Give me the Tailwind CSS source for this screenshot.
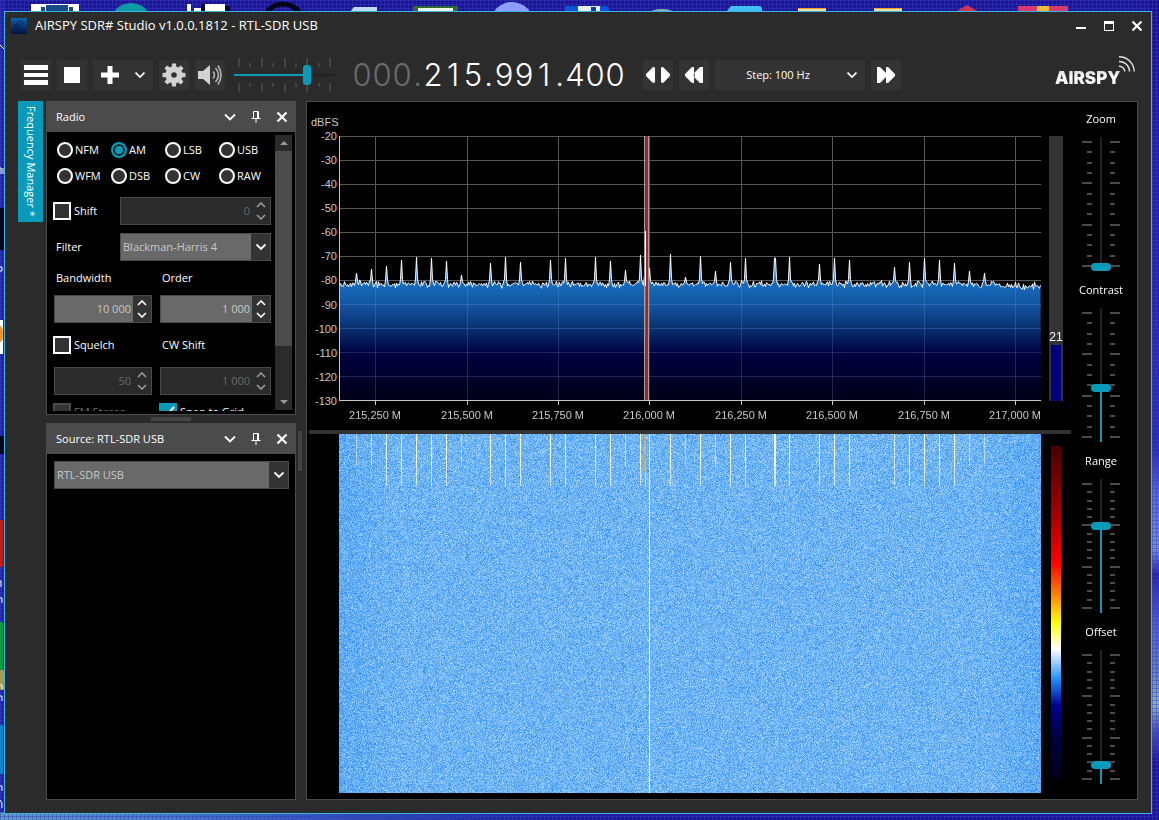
<!DOCTYPE html>
<html lang="en">
<head>
    <meta charset="UTF-8">
    <meta name="viewport" content="width=device-width, initial-scale=1.0">
    <title>AIRSPY SDR# Studio v1.0.0.1812 - RTL-SDR USB</title>
    <script src="https://cdn.jsdelivr.net/npm/@tailwindcss/browser@4"></script>
</head>
<body class="relative h-screen overflow-hidden bg-[#1b1594] pt-[11px] pr-[7px] pb-1.5 pl-1 font-['Open_Sans','Noto_Sans',sans-serif] text-[11px] text-white">

    <!-- Desktop wallpaper and the icons that stick out behind the window -->
    <svg class="absolute inset-0 size-full" viewBox="0 0 1159 820" preserveAspectRatio="none" aria-hidden="true">
        <defs>
            <pattern id="mesh" width="4" height="4" patternUnits="userSpaceOnUse">
                <path d="M0 .5H4M.5 0V4" stroke="#3a3cc0" stroke-opacity=".45"/>
            </pattern>
            <linearGradient id="side" x1="0" x2="0" y1="0" y2="1">
                <stop offset="0" stop-color="#180f88"/><stop offset=".2" stop-color="#2320a8"/><stop offset=".55" stop-color="#2a2cb4"/>
                <stop offset=".6" stop-color="#4d6ad6"/><stop offset=".67" stop-color="#6c8fe0"/><stop offset=".7" stop-color="#2127a8"/>
                <stop offset=".76" stop-color="#4a60cc"/><stop offset=".82" stop-color="#5a86c4"/><stop offset=".86" stop-color="#7fb6cc"/>
                <stop offset=".89" stop-color="#4a52b8"/><stop offset=".93" stop-color="#1c1494"/><stop offset="1" stop-color="#1c1494"/>
            </linearGradient>
            <linearGradient id="floor">
                <stop offset="0" stop-color="#5a9dc0"/><stop offset=".15" stop-color="#3f7fc0"/><stop offset=".3" stop-color="#2b4fb4"/>
                <stop offset=".5" stop-color="#1b1a98"/><stop offset="1" stop-color="#1b1494"/>
            </linearGradient>
        </defs>
        <rect x="1150" width="9" height="820" fill="url(#side)"/>
        <rect width="5" height="820" fill="#2222a8"/>
        <rect y="812" width="1159" height="8" fill="url(#floor)"/>
        <rect width="1159" height="820" fill="url(#mesh)"/>
        <path d="M31 4h48v8H31z" fill="#fff"/><path d="M41 7h4v5h-4zM46 5h22v7H46zM69 7h4v5h-4z" fill="#174a86"/>
        <circle cx="131" cy="24" r="21" fill="#0d9ba5"/>
        <path d="M187 4h4v8h-4zM194 8h8v4h-8zM205 4h20v8h-20z" fill="#fff"/><path d="M201 4h4v8h-4zM225 6h5v6h-5z" fill="#0a0a22"/>
        <circle cx="283" cy="24" r="20" fill="none" stroke="#05051a" stroke-width="5"/>
        <path d="M354 7h23v5h-27z" fill="#b9dcf0"/>
        <path d="M413 6h45v6h-45z" fill="#2d6b32"/><path d="M418 8h35v4h-35z" fill="#e9f6ee"/>
        <circle cx="512" cy="24" r="22" fill="#8d9cff"/>
        <path d="M565 6h42l4 6h-46z" fill="#0a54dd"/><path d="M578 6h22v6h-22z" fill="#e6f0fb"/><path d="M591 7h5v4h-5z" fill="#123e9a"/>
        <ellipse cx="662" cy="13" rx="12" ry="4" fill="#7fb5b4"/>
        <path d="M731 6h28a3 3 0 0 1 3 3v3h-36z" fill="#3fc1f7"/>
        <path d="M798 8h28v4h-28zM874 8h28v4h-28z" fill="#e9e09a"/><path d="M798 8h28v1h-28zM874 8h28v1h-28z" fill="#f2a13c"/>
        <path d="M967 5l12 7h-24z" fill="#c83458"/>
        <path d="M1018 6h50v6h-50z" fill="#d73b6e"/><path d="M1037 6h12v6h-12z" fill="#eec03c"/>
        <path d="M0 320h3v34H0z" fill="#fff"/><path d="M0 326q3 0 3 8t-3 8z" fill="#f0932b"/>
        <path d="M0 208h4v42H0zM0 436h4v18H0z" fill="#05051e"/>
        <path d="M0 520h3v47H0z" fill="#c21d14"/><path d="M0 622h3v48H0z" fill="#0f9d3c"/>
        <path d="M0 670h4v20H0z" fill="#a89a4c"/><path d="M0 725h3v49H0z" fill="#1283d0"/>
        <path d="M0 45l4 4M0 168h1v6M3 168v6M0 267h2v4H0M0 581h1v6M0 685h2v4M0 696h2v5M0 786h2v5M0 800l2 3v5M0 598h2v5" fill="none" stroke="#fff"/>
    </svg>

    <!-- Application window -->
    <div class="relative flex h-full flex-col border border-[#3fb4e4] bg-[#2b2b2b]">

        <!-- Title bar -->
        <header class="flex h-7 shrink-0 items-center pl-1.5">
            <svg class="size-4" viewBox="0 0 16 16" aria-hidden="true">
                <defs>
                    <linearGradient id="appIcon" x1="0" x2="0" y1="0" y2="1"><stop offset="0" stop-color="#0f62ae"/><stop offset="1" stop-color="#03103e"/></linearGradient>
                </defs>
                <path d="M0 0h16v16H0z" fill="url(#appIcon)"/>
                <path d="M2 11c2-6 5-6 5-3s-4 5-4 2 4-5 6-6 4 1 2 3-4 3-3 4" fill="none" stroke="#061c52"/>
            </svg>
            <h1 class="ml-2 text-[13px]">AIRSPY SDR# Studio v1.0.0.1812 - RTL-SDR USB</h1>
            <div class="ml-auto flex">
                <button class="flex h-6 w-7 items-center justify-center" aria-label="Minimize">
                    <svg class="size-3" viewBox="0 0 12 12"><path d="M1 7h10v2H1z" fill="#fff"/></svg>
                </button>
                <button class="flex h-6 w-7 items-center justify-center" aria-label="Maximize">
                    <svg class="size-3" viewBox="0 0 12 12"><path d="M1 1h10v10H1zM2 4v6h8V4z" fill="#fff" fill-rule="evenodd"/></svg>
                </button>
                <button class="flex h-6 w-7 items-center justify-center" aria-label="Close">
                    <svg class="size-3" viewBox="0 0 12 12"><path d="M1.500 1.500l9 9M10.500 1.500l-9 9" stroke="#fff" stroke-width="2.200"/></svg>
                </button>
            </div>
        </header>

        <!-- Toolbar -->
        <div class="flex shrink-0 items-center gap-1.5 px-4 pt-5 pb-[11px]">
            <button class="flex size-[30px] items-center justify-center bg-[#333]" aria-label="Menu">
                <svg class="h-6 w-6" viewBox="0 0 24 24"><path d="M0 2h24v5H0zM0 10h24v4H0zM0 17h24v5H0z" fill="#fff"/></svg>
            </button>
            <button class="flex size-[30px] items-center justify-center bg-[#333]" aria-label="Stop">
                <span class="size-4 bg-white"></span>
            </button>
            <button class="flex h-[30px] w-[60px] items-center justify-between bg-[#333] pr-2 pl-2" aria-label="Add">
                <svg class="size-[18px]" viewBox="0 0 18 18"><path d="M6.500 0h5v6.500H18v5h-6.500V18h-5v-6.500H0v-5h6.500z" fill="#fff"/></svg>
                <svg class="h-3 w-2.5" viewBox="0 0 10 12"><path d="M0.500 3.500l4.500 4.500 4.500-4.500" fill="none" stroke="#fff" stroke-width="1.700"/></svg>
            </button>
            <button class="flex size-[30px] items-center justify-center bg-[#333]" aria-label="Settings">
                <svg class="size-6" viewBox="0 0 24 24">
                    <g fill="#d2d2d2">
                        <path d="M12 3.500a8.500 8.500 0 1 0 0 17 8.500 8.500 0 0 0 0-17zm0 5.700a2.800 2.800 0 1 1 0 5.600 2.800 2.800 0 0 1 0-5.600z" fill-rule="evenodd"/>
                        <path id="tooth" d="M9.500 5l.6-4.500h3.800l.6 4.500z"/>
                        <use href="#tooth" transform="rotate(45 12 12)"/><use href="#tooth" transform="rotate(90 12 12)"/>
                        <use href="#tooth" transform="rotate(135 12 12)"/><use href="#tooth" transform="rotate(180 12 12)"/>
                        <use href="#tooth" transform="rotate(225 12 12)"/><use href="#tooth" transform="rotate(270 12 12)"/>
                        <use href="#tooth" transform="rotate(315 12 12)"/>
                    </g>
                </svg>
            </button>
            <button class="flex size-[30px] items-center justify-center bg-[#333]" aria-label="Mute">
                <svg class="size-6" viewBox="0 0 24 24">
                    <path d="M0 8h5l7-6v20l-7-6H0z" fill="#d2d2d2"/>
                    <path d="M15 8.500q3 3.500 0 7M17.500 5q6 7 0 14M20 2.500q6 9.500 0 19" fill="none" stroke="#b4b4b4" stroke-width="1.600"/>
                </svg>
            </button>

            <!-- Volume -->
            <div class="relative -my-1 ml-[3px] flex h-9 w-[101px] items-center">
                <div class="absolute inset-x-1 inset-y-0 flex items-center justify-between" data-hticks="9"></div>
                <div class="absolute inset-x-0 h-0.5 bg-[#222]"><div class="h-full w-[73%] bg-[#0a9ab9]"></div></div>
                <input type="range" min="0" max="100" value="74" aria-label="Volume" class="relative h-5 w-full appearance-none bg-transparent [&::-webkit-slider-thumb]:h-5 [&::-webkit-slider-thumb]:w-2 [&::-webkit-slider-thumb]:appearance-none [&::-webkit-slider-thumb]:rounded-[3px] [&::-webkit-slider-thumb]:bg-[#0a9ab9]">
            </div>

            <!-- Frequency readout, filled by script -->
            <div id="frequency" class="ml-[11px] flex font-['Inter',sans-serif] text-[31px] leading-7 font-light"></div>

            <button class="ml-3 flex size-[30px] items-center justify-center bg-[#333]" aria-label="Center frequency">
                <svg class="h-[18px] w-6" viewBox="0 0 24 18"><path d="M9 1.500v15L7 17 0 10V8l7-7zM15 1.500v15l2 .5 7-7V8l-7-7z" fill="#fff"/></svg>
            </button>
            <button class="flex size-[30px] items-center justify-center bg-[#333]" aria-label="Step down">
                <svg class="h-[18px] w-[18px]" viewBox="0 0 18 18"><path d="M9 1v6l6-6 3 0v16h-3l-6-6v6H7L0 10V8l7-7z" fill="#fff"/><path d="M9.500 7.500L9 9l.5 1.500" stroke="#333" fill="none"/></svg>
            </button>
            <div class="relative h-[30px] w-[150px]">
                <select aria-label="Step" class="size-full appearance-none bg-[#333] pr-6 text-center text-[11px] [text-align-last:center]">
                    <option>Step: 100 Hz</option>
                </select>
                <svg class="pointer-events-none absolute top-[9px] right-2 h-3 w-2.5" viewBox="0 0 10 12"><path d="M0.500 3.500l4.500 4.500 4.500-4.500" fill="none" stroke="#fff" stroke-width="1.700"/></svg>
            </div>
            <button class="flex size-[30px] items-center justify-center bg-[#333]" aria-label="Step up">
                <svg class="h-[18px] w-[18px]" viewBox="0 0 18 18"><path d="M9 1v6L3 1H0v16h3l6-6v6h2l7-7V8l-7-7z" fill="#fff"/></svg>
            </button>

            <a href="#" class="relative ml-auto flex h-[30px] w-20 items-end" aria-label="Airspy">
                <span class="bg-gradient-to-b from-[#c8c8c8] via-white to-[#e4e4e4] bg-clip-text font-['Inter',sans-serif] text-[17px] leading-6 font-black text-transparent">AIRSPY</span>
                <svg class="absolute -top-1 right-0 size-4" viewBox="0 0 16 16"><path d="M0 .8A15 15 0 0 1 15.200 15.500M0 5.500A10 10 0 0 1 10.500 15.500M0 10.300A5.500 5.500 0 0 1 5.800 15.500" fill="none" stroke="#e4e4e4" stroke-width="1.400"/></svg>
            </a>
        </div>

        <!-- Work area -->
        <main class="flex min-h-0 flex-1 px-[13px] pb-[13px]">
            <button class="mr-[3px] flex h-[121px] w-[25px] shrink-0 items-center justify-center bg-[#0a9ab9] text-[11px] [writing-mode:vertical-rl]">Frequency Manager *</button>

            <div class="flex w-[250px] shrink-0 flex-col">
                <!-- Radio panel -->
                <section class="flex h-[314px] shrink-0 flex-col border border-[#4b4b4b] bg-black">
                    <div class="flex h-[30px] shrink-0 items-center bg-[#4b4b4b] pr-[7px] pl-[9px]">
                        <h2>Radio</h2>
                        <div class="ml-auto flex gap-3.5" data-panel-buttons></div>
                    </div>
                    <div class="flex h-[279px] shrink-0 overflow-hidden pr-[3px]">
                        <form class="w-[228px] pt-[5px] pr-1 pl-[7px]">
                            <div class="grid grid-cols-[54px_54px_54px_54px]" id="modes"></div>
                            <div class="mt-2 flex items-center">
                                <label class="flex w-[67px] items-center gap-[3px] -ml-px"><input type="checkbox" class="size-[18px] appearance-none border-2 border-white bg-[#333]">Shift</label>
                                <div class="flex h-7 flex-1 border border-[#4b4b4b] bg-[#2b2b2b]" data-spin="0" data-label="Shift" data-off></div>
                            </div>
                            <div class="mt-2 flex items-center">
                                <label for="filter" class="w-16 pl-0.5">Filter</label>
                                <div class="relative ml-0.5 h-7 flex-1">
                                    <select id="filter" class="size-full appearance-none border border-[#4b4b4b] bg-[#696969] pl-0.5 text-[11px] text-[#c8c8c8]"><option>Blackman-Harris 4</option></select>
                                    <span class="pointer-events-none absolute inset-y-px right-px flex w-[19px] items-center justify-center bg-[#333]">
                                        <svg class="h-3 w-2.5" viewBox="0 0 10 12"><path d="M0.500 3.500l4.500 4.500 4.500-4.500" fill="none" stroke="#fff" stroke-width="1.900"/></svg>
                                    </span>
                                </div>
                            </div>
                            <div class="mt-2 grid h-[18px] grid-cols-[106px_1fr] items-center pl-0.5"><span>Bandwidth</span><span>Order</span></div>
                            <div class="mt-2 grid grid-cols-[98px_1fr] gap-2">
                                <div class="flex h-7 border border-[#4b4b4b] bg-[#696969]" data-spin="10 000" data-label="Bandwidth"></div>
                                <div class="flex h-7 border border-[#4b4b4b] bg-[#696969]" data-spin="1 000" data-label="Order"></div>
                            </div>
                            <div class="mt-[13px] grid grid-cols-[106px_1fr] items-center">
                                <label class="flex items-center gap-[3px] -ml-px"><input type="checkbox" class="size-[18px] appearance-none border-2 border-white bg-[#333]">Squelch</label>
                                <span class="pl-0.5">CW Shift</span>
                            </div>
                            <div class="mt-[13px] grid grid-cols-[98px_1fr] gap-2">
                                <div class="flex h-7 border border-[#4b4b4b] bg-[#2b2b2b]" data-spin="50" data-label="Squelch" data-off></div>
                                <div class="flex h-7 border border-[#4b4b4b] bg-[#2b2b2b]" data-spin="1 000" data-label="CW Shift" data-off></div>
                            </div>
                            <div class="mt-2 grid grid-cols-[106px_1fr] items-center">
                                <label class="flex items-center gap-[3px] -ml-px text-[#6e6e6e]"><input type="checkbox" disabled class="size-[18px] appearance-none border-2 border-[#4b4b4b] bg-[#333]">FM Stereo</label>
                                <label class="flex items-center gap-[3px] -ml-px">
                                    <span class="relative size-[18px]">
                                        <input type="checkbox" checked class="block size-[18px] appearance-none bg-[#0a9ab9]">
                                        <svg class="pointer-events-none absolute inset-0" viewBox="0 0 18 18"><path d="M3 9l4 4 8-9" fill="none" stroke="#fff" stroke-width="2"/></svg>
                                    </span>Snap to Grid
                                </label>
                            </div>
                        </form>
                        <!-- Scroll bar -->
                        <div class="mt-[3px] flex h-[275px] w-[17px] flex-col bg-[#2b2b2b]">
                            <span class="flex h-4 items-center justify-center"><svg class="h-1 w-2" viewBox="0 0 8 4"><path d="M4 0l4 4H0z" fill="#999"/></svg></span>
                            <span class="h-[195px] bg-[#4b4b4b]"></span>
                            <span class="mt-auto flex h-4 items-center justify-center"><svg class="h-1 w-2" viewBox="0 0 8 4"><path d="M4 4l4-4H0z" fill="#999"/></svg></span>
                        </div>
                    </div>
                </section>

                <div class="flex h-2 shrink-0 items-center justify-center"><span class="h-1 w-10 bg-[#444]"></span></div>

                <!-- Source panel -->
                <section class="flex-1 border border-[#4b4b4b] bg-black">
                    <div class="flex h-[30px] items-center bg-[#4b4b4b] pr-[7px] pl-[9px]">
                        <h2>Source: RTL-SDR USB</h2>
                        <div class="ml-auto flex gap-3.5" data-panel-buttons></div>
                    </div>
                    <div class="relative mx-[7px] mr-1.5 mt-[7px] h-7">
                        <select aria-label="Source" class="size-full appearance-none border border-[#4b4b4b] bg-[#696969] pl-0.5 text-[11px] text-[#c8c8c8]"><option>RTL-SDR USB</option></select>
                        <span class="pointer-events-none absolute inset-y-px right-px flex w-[19px] items-center justify-center bg-[#333]">
                            <svg class="h-3 w-2.5" viewBox="0 0 10 12"><path d="M0.500 3.500l4.500 4.500 4.500-4.500" fill="none" stroke="#fff" stroke-width="1.900"/></svg>
                        </span>
                    </div>
                </section>
            </div>

            <div class="flex w-2.5 shrink-0 items-center pl-0.5"><span class="h-10 w-1 bg-[#444]"></span></div>

            <!-- Spectrum and waterfall -->
            <section class="flex min-w-0 flex-1 border border-[#4b4b4b] bg-black">
                <div class="flex min-w-0 flex-1 flex-col">
                    <div class="grid h-[328px] shrink-0 grid-cols-[32px_minmax(0,1fr)_30px] grid-rows-[34px_1fr_29px] font-['Liberation_Sans',sans-serif] text-[#c8c8c8]">
                        <div class="pt-3.5 pl-1 leading-3">dBFS</div><div></div><div></div>
                        <div id="levels" class="flex flex-col justify-between pr-0.5 text-right"></div>
                        <canvas id="spectrum" class="h-[265px] w-full min-w-0"></canvas>
                        <div class="ml-2 flex w-3.5 flex-col bg-[#333] px-0.5">
                            <span class="mt-auto flex justify-center text-[12px] leading-4 text-white">21</span>
                            <span class="h-[21%] bg-[#000080]"></span>
                        </div>
                        <div></div>
                        <div id="marks" class="relative"></div>
                    </div>
                    <div class="ml-0.5 h-1 shrink-0 bg-[#333]"></div>
                    <div class="grid min-h-0 flex-1 grid-cols-[minmax(0,1fr)_30px] grid-rows-[minmax(0,1fr)] pb-1.5 pl-8">
                        <canvas id="waterfall" class="h-full w-full min-w-0"></canvas>
                        <div class="mt-3 mb-3.5 ml-2.5 w-2.5 bg-[linear-gradient(#4b0000,#a00000_20%,#ff0000_35%,#ff7a00_44%,#ffff00_53%,#ffffff_61%,#1e90ff_70%,#000091_78%,#000040_88%,#00001c)]"></div>
                    </div>
                </div>

                <div class="flex w-[66px] shrink-0 flex-col gap-2.5 pt-2 pr-1.5 text-center" id="sliders"></div>
            </section>
        </main>
    </div>

    <script>
        // --- Frequency readout ---
        const leading = '000.';
        const tuned = '215.991.400';
        const digit = (c, dim) => `<span class="${c === '.' ? 'w-[11px]' : 'w-5'} flex justify-center ${dim ? 'text-[#6c6c6c]' : 'text-white'}">${c}</span>`;
        document.getElementById('frequency').innerHTML =
            [...leading].map(c => digit(c, true)).join('') + [...tuned].map(c => digit(c, false)).join('');

        // --- Panel header buttons ---
        document.querySelectorAll('[data-panel-buttons]').forEach(el => {
            el.innerHTML = `
                <button class="size-3" aria-label="Collapse"><svg viewBox="0 0 12 12"><path d="M1 3.500l5 5 5-5" fill="none" stroke="#fff" stroke-width="1.800"/></svg></button>
                <button class="size-3" aria-label="Pin"><svg viewBox="0 0 12 12"><path d="M3.500 7V.5h5V7M1.500 7.500h9M6 8v4" fill="none" stroke="#fff"/><path d="M7 1h1.500v6H7z" fill="#fff"/></svg></button>
                <button class="size-3" aria-label="Close panel"><svg viewBox="0 0 12 12"><path d="M1.500 1.500l9 9M10.500 1.500l-9 9" stroke="#fff" stroke-width="2.200"/></svg></button>`;
        });

        // --- Demodulator modes ---
        document.getElementById('modes').innerHTML = ['NFM', 'AM', 'LSB', 'USB', 'WFM', 'DSB', 'CW', 'RAW'].map(m => `
            <label class="flex h-[26px] items-center gap-0.5 pl-[3px]">
                <input type="radio" name="mode" ${m === 'AM' ? 'checked' : ''} class="size-4 shrink-0 appearance-none rounded-full border-2 border-white bg-[#333] checked:border-[#0a9ab9] checked:bg-[#0a9ab9] checked:shadow-[inset_0_0_0_2px_#222]">${m}
            </label>`).join('');

        // --- Number boxes ---
        document.querySelectorAll('[data-spin]').forEach(el => {
            const off = 'off' in el.dataset;
            const stroke = off ? '#999' : '#fff';
            el.innerHTML = `
                <input type="text" value="${el.dataset.spin}" aria-label="${el.dataset.label}" ${off ? 'disabled' : ''} class="w-0 min-w-0 flex-1 pr-0.5 text-right text-[11px] ${off ? 'text-[#6a6a6a]' : 'text-[#c8c8c8]'}">
                <span class="flex w-[18px] flex-col items-center justify-center gap-1.5 ${off ? 'bg-[#2b2b2b]' : 'bg-[#333]'}">
                    <button type="button" class="h-1.5 w-2.5" aria-label="Increase"><svg class="block" viewBox="0 0 10 6"><path d="M1 5l4-4 4 4" fill="none" stroke="${stroke}" stroke-width="1.600"/></svg></button>
                    <button type="button" class="h-1.5 w-2.5" aria-label="Decrease"><svg class="block" viewBox="0 0 10 6"><path d="M1 1l4 4 4-4" fill="none" stroke="${stroke}" stroke-width="1.600"/></svg></button>
                </span>`;
        });

        // --- Volume ticks ---
        document.querySelectorAll('[data-hticks]').forEach(el => {
            for (let i = 0; i < +el.dataset.hticks; i++) {
                const len = i % 2 ? 'h-1' : 'h-[9px]';
                el.innerHTML += `<span class="flex h-full w-0.5 flex-col justify-between">
                    <span class="flex h-2.5 items-end"><span class="w-0.5 bg-[#444] ${len}"></span></span>
                    <span class="flex h-2.5 items-start"><span class="w-0.5 bg-[#444] ${len}"></span></span></span>`;
            }
        });

        // --- Vertical sliders: title, value in %, minor steps per major tick ---
        const sliders = [['Zoom', 0, 4], ['Contrast', 40, 4], ['Range', 66, 5], ['Offset', 12, 5]];
        document.getElementById('sliders').innerHTML = sliders.map(([name, value, every]) => {
            let ticks = '';
            for (let i = 0; i <= every * 3; i++) {
                const len = i % every ? 'w-[5px]' : 'w-2.5';
                ticks += `<span class="flex h-0.5 justify-between"><span class="flex w-2.5 justify-end"><span class="bg-[#4b4b4b] ${len}"></span></span><span class="flex w-2.5"><span class="bg-[#4b4b4b] ${len}"></span></span></span>`;
            }
            return `<label class="block">
                <span class="block leading-[18px]">${name}</span>
                <span class="relative mx-auto mt-[9px] flex h-[134px] w-[38px] justify-center">
                    <span class="absolute inset-x-0 inset-y-1 flex flex-col justify-between">${ticks}</span>
                    <span class="absolute inset-y-0 flex w-0.5 flex-col justify-end bg-[#222]"><span class="bg-[#0a9ab9]" style="height:${value}%"></span></span>
                    <input type="range" min="0" max="100" value="${value}" class="relative h-full w-5 appearance-none bg-transparent [direction:rtl] [writing-mode:vertical-lr] [&::-webkit-slider-thumb]:h-2 [&::-webkit-slider-thumb]:w-5 [&::-webkit-slider-thumb]:appearance-none [&::-webkit-slider-thumb]:rounded-[4px] [&::-webkit-slider-thumb]:bg-[#0a9ab9]">
                </span>
            </label>`;
        }).join('');

        // --- Axis labels ---
        const SPAN = 702; // width in bins
        const marks = [[36, '215,250 M'], [128, '215,500 M'], [219, '215,750 M'], [310, '216,000 M'], [402, '216,250 M'], [493, '216,500 M'], [585, '216,750 M'], [676, '217,000 M']];
        document.getElementById('marks').innerHTML = marks.map(([x, text]) => `
            <span class="absolute top-0 flex w-0 flex-col items-center whitespace-nowrap" style="left:${x / SPAN * 100}%">
                <span class="h-1 w-px bg-[#c8c8c8]"></span><span class="mt-1 leading-3">${text}</span>
            </span>`).join('');
        for (let db = -20; db >= -130; db -= 10) {
            document.getElementById('levels').innerHTML += `<span class="h-0 leading-0">${db}</span>`;
        }

        // --- Signals: bin, height above the noise floor ---
        const peaks = [[17, 10], [32, 14], [47, 17], [62, 23], [77, 26], [92, 25], [107, 22], [122, 8], [151, 20], [166, 26], [181, 21], [211, 23], [226, 25], [256, 26], [271, 22], [286, 13], [301, 28], [306, 52], [310, 15], [331, 29], [346, 6], [361, 27], [376, 12], [391, 21], [406, 25], [435, 25], [436, 25], [450, 26], [480, 19], [495, 25], [510, 23], [555, 16], [570, 21], [585, 25], [600, 23], [615, 20], [630, 12], [645, 10]];

        let seed = 1812;
        function random() {
            seed = (seed * 1664525 + 1013904223) % 4294967296;
            return seed / 4294967296;
        }

        function drawSpectrum() {
            const canvas = document.getElementById('spectrum');
            const w = canvas.width = canvas.clientWidth;
            const h = canvas.height = canvas.clientHeight;
            if (!w || !h) return;
            const ctx = canvas.getContext('2d');
            const scale = w / SPAN;

            const grid = (color) => {
                ctx.strokeStyle = color;
                ctx.lineWidth = 1;
                ctx.beginPath();
                for (let y = 0; y < h; y += 24) { ctx.moveTo(0, y + 0.5); ctx.lineTo(w, y + 0.5); }
                marks.forEach(([x]) => { const px = Math.round(x * scale) + 0.5; ctx.moveTo(px, 0); ctx.lineTo(px, h); });
                ctx.stroke();
            };
            grid('#585858');

            const trace = [];
            for (let x = 0; x < SPAN; x++) trace.push(148.5 + (random() + random() - 1) * 4 - (random() > 0.93 ? 4 * random() : 0) + (x > 660 ? 2 : 0));
            peaks.forEach(([x, up]) => {
                trace[x] = 147 - up;
                trace[x - 1] = Math.min(trace[x - 1], 147 - up * 0.15);
                trace[x + 1] = Math.min(trace[x + 1], 147 - up * 0.15);
            });
            trace[435] = trace[436];

            const line = new Path2D();
            trace.forEach((y, x) => line.lineTo(x * scale + 0.5, y));
            const area = new Path2D(line);
            area.lineTo(w, h);
            area.lineTo(0, h);

            const fill = ctx.createLinearGradient(0, 120, 0, h);
            fill.addColorStop(0, '#3d8ad0');
            fill.addColorStop(0.2, '#166bbb');
            fill.addColorStop(0.35, '#11529c');
            fill.addColorStop(0.5, '#0a3070');
            fill.addColorStop(0.67, '#010140');
            fill.addColorStop(1, '#000018');
            ctx.fillStyle = fill;
            ctx.fill(area);
            ctx.save();
            ctx.clip(area);
            grid('rgba(140,170,230,0.22)');
            ctx.restore();
            ctx.strokeStyle = '#fff';
            ctx.stroke(line);

            // tuned filter band
            const cx = Math.round(307 * scale);
            ctx.fillStyle = 'rgba(130,140,140,0.5)';
            ctx.fillRect(cx - 2, 0, 5, h);
            ctx.fillStyle = '#9aa6a2';
            ctx.fillRect(cx - 2, 0, 1, h);
            ctx.fillRect(cx + 2, 0, 1, h);
            ctx.fillStyle = '#b01e2a';
            ctx.fillRect(cx, 0, 2, h);
            ctx.fillStyle = '#fff';
            ctx.fillRect(cx - 1, 95, 1, 55);

            ctx.fillStyle = '#c8c8c8';
            ctx.fillRect(0, 0, 1, h);
            ctx.fillRect(0, h - 1, w, 1);
        }

        function drawWaterfall() {
            const canvas = document.getElementById('waterfall');
            const w = canvas.width = canvas.clientWidth;
            const h = canvas.height = canvas.clientHeight;
            if (!w || !h) return;
            const ctx = canvas.getContext('2d');
            const scale = w / SPAN;
            const img = ctx.createImageData(w, h);
            for (let y = 0; y < h; y++) {
                for (let x = 0; x < w; x++) {
                    const edge = Math.min(1, Math.min(x, w - x) / 60);
                    const t = Math.max(0, Math.min(1, (random() + random() + random()) / 3 * 1.1 - 0.15 + edge * 0.1));
                    const i = (y * w + x) * 4;
                    img.data[i] = 35 + 150 * t;
                    img.data[i + 1] = 135 + 90 * t;
                    img.data[i + 2] = 240 + 15 * t;
                    img.data[i + 3] = 255;
                }
            }
            ctx.putImageData(img, 0, 0);

            peaks.forEach(([x, up]) => {
                const end = up > 15 ? 52 : 32;
                const strength = Math.max(0.5, Math.min(1, up / 20));
                for (let y = 0; y < end; y++) {
                    const fade = y > 32 ? 0.75 : 1;
                    ctx.fillStyle = random() > 0.4 ? `rgba(255,255,215,${strength * fade})` : `rgba(240,240,160,${strength * fade})`;
                    ctx.fillRect(Math.round(x * scale), y, 1, 1);
                }
            });
            for (let y = 0; y < 38; y++) {
                ctx.fillStyle = random() > 0.5 ? '#d09a6a' : '#c8b8a0';
                ctx.fillRect(Math.round(305 * scale), y, 2, 1);
            }
            ctx.fillStyle = '#f4f8ea';
            ctx.fillRect(Math.round(310 * scale), 0, 1, h);
        }

        function draw() {
            seed = 1812;
            drawSpectrum();
            drawWaterfall();
        }

        draw();
        // redraw whenever the layout settles on another size
        const observer = new ResizeObserver(draw);
        observer.observe(document.getElementById('spectrum'));
        observer.observe(document.getElementById('waterfall'));
    </script>
</body>
</html>
